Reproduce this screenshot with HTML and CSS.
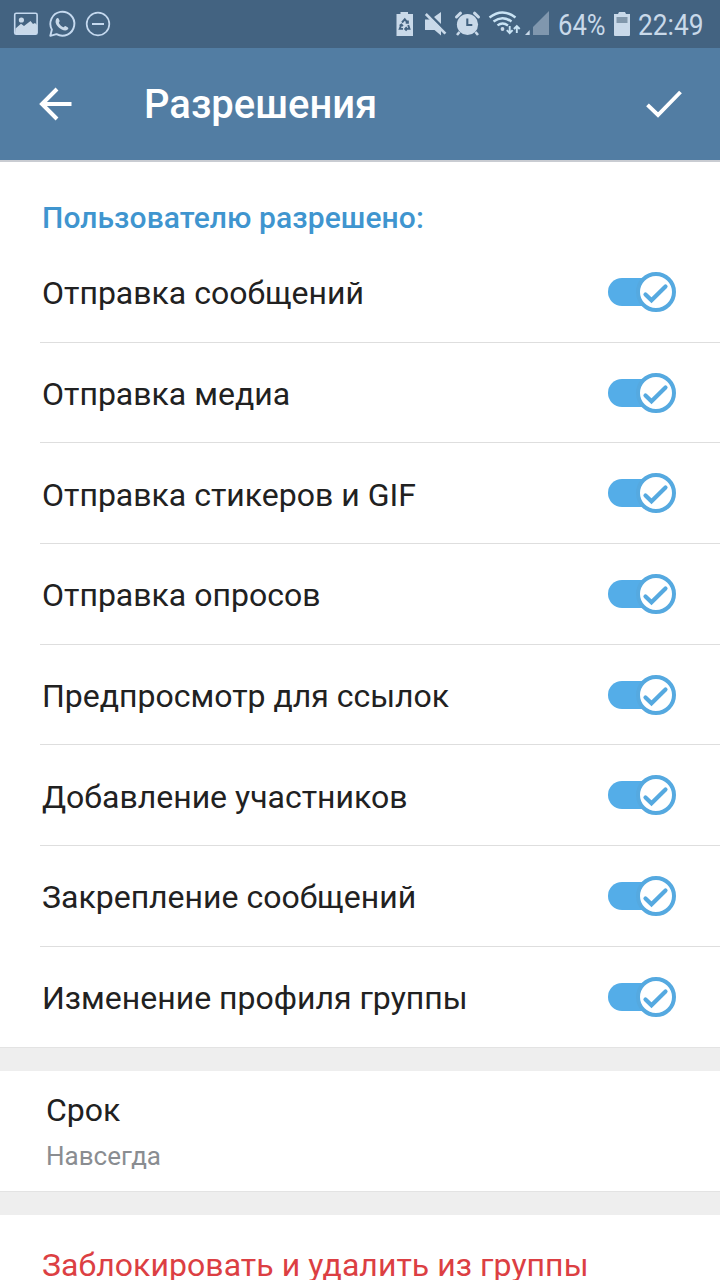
FILE: index.html
```html
<!DOCTYPE html>
<html lang="ru">
<head>
  <meta charset="UTF-8" />
  <meta name="viewport" content="width=device-width, initial-scale=1.0"/>
  <title>Разрешения</title>
  <link rel="stylesheet" href="styles.css">
</head>
<body>
  <svg class="sprite" aria-hidden="true">
    <symbol id="toggle" viewBox="0 0 70 42">
      <path d="M15 7h34v28H15a14 14 0 0 1 0-28z" fill="#54ade8"/>
      <circle cx="49" cy="21" r="18" fill="#fff" stroke="#55a9e0" stroke-width="4"/>
      <path d="M38.500 23.500l6 5.800L58.500 15.500" fill="none" stroke="#55a9e0" stroke-width="4.200" stroke-linecap="round"/>
    </symbol>
  </svg>

  <div class="status-bar">
    <svg width="100" height="48" viewBox="12 0 100 48">
      <rect x="14.700" y="13.200" width="22.400" height="21" rx="1.500" fill="none" stroke="#c5d9ef" stroke-width="1.600"/>
      <circle cx="21.400" cy="20" r="2.600"/>
      <path d="M15.500 28.500l5.500-4.800 3 2.300 6.500-5 2.500 3 2-1 2 2v9H15z"/>
      <path d="M50.300 35.800l1.600-6.200a12 12 0 1 1 4.600 4.600z" fill="none" stroke="#c5d9ef" stroke-width="1.900" stroke-linejoin="round"/>
      <path d="M56.900 18.200c.7-.6 1.500-.3 1.800.5l.9 2.100c.3.900-.9 1.500-.7 2.100.8 1.900 2.400 3.500 4.500 4.300.7.200 1.300-1.300 2-1.100l2.500 1.300c.8.500.4 1.500-.3 2.200-3.800 3.400-12.800-4-12-8.700.2-1.200.6-2.100 1.300-2.700z"/>
      <circle cx="98" cy="24" r="11.300" fill="none" stroke="#c5d9ef" stroke-width="1.700"/>
      <path d="M92 24h12" stroke="#c5d9ef" stroke-width="2"/>
    </svg>
    <svg width="154" height="48" viewBox="396 0 154 48">
      <path d="M396.500 14h4v-2h7.500v2h5v22h-16.500z"/>
      <g fill="none" stroke="#436381" stroke-width="1.900">
        <path d="M402 22.500l2.800-3.200 2.700 3.200M408.200 25l1.300 3.900h-3.800M403 28.900h-3.300l1.600-4"/>
        <path d="M405.700 22.800h2.200v-2.200M406.800 27.200l-1.600 1.700 1.600 1.600M399.700 25.800l1.700-1.200 1.500 1.600"/>
      </g>
      <path d="M425 19.500h8l8 8v8L434.500 30H425zM434 17l7-5v12z"/>
      <path d="M427.500 12.500l19 19" stroke="#436381" stroke-width="2"/>
      <path d="M425.800 14l19.600 19.600" stroke="#c9d9e9" stroke-width="2.700"/>
      <circle cx="467.500" cy="24.500" r="10.600"/>
      <path d="M459.500 32l-2.500 3M475.500 32l2.500 3" stroke="#c9d9e9" stroke-width="2.600"/>
      <path d="M456.500 17l4-3.800M478.500 17l-4-3.800" stroke="#c9d9e9" stroke-width="3" stroke-linecap="round"/>
      <path d="M467.300 18.500V25h5" fill="none" stroke="#436381" stroke-width="2.100"/>
      <g fill="none" stroke="#c9e3f4" stroke-width="2.400">
        <path d="M489.500 17.500q13-10 26 0M493.500 21.500q9-6.700 18 0M497.500 25.400q5-3.700 10.500 0"/>
      </g>
      <circle cx="502.500" cy="29" r="1.900"/>
      <path d="M509.700 26v7M506.800 30.200l2.900 3 2.900-3M516.800 33v-6.500M513.900 29l2.900-3 2.900 3" fill="none" stroke="#c9e3f4" stroke-width="1.900"/>
      <path d="M525 35l4.700-5v5z"/>
      <path d="M533 35V27L549 11v24z" fill="#8097ae"/>
    </svg>
    <svg width="49" height="48" viewBox="0 0 49 48"><text x="0" y="35" textLength="47.500" lengthAdjust="spacingAndGlyphs">64%</text></svg>
    <svg class="battery" width="16" height="48" viewBox="614 0 16 48">
      <path d="M614 14h4l1-2h6l1 2h4v21q0 1-1 1h-14q-1 0-1-1z"/>
      <path d="M616.500 17h11v6h-11z" fill="#8197ab"/>
    </svg>
    <svg width="68" height="48" viewBox="0 0 68 48"><text x="0" y="35" textLength="65.500" lengthAdjust="spacingAndGlyphs">22:49</text></svg>
  </div>

  <header class="app-bar">
    <svg width="34" height="34" viewBox="0 0 34 34"><path d="M32.500 17H4M18 2L3 17l15 15" fill="none" stroke="#fff" stroke-width="4"/></svg>
    <h1>Разрешения</h1>
    <svg width="36" height="28" viewBox="0 0 36 28"><path d="M1.500 14.800L12 25 34.500 2" fill="none" stroke="#fff" stroke-width="3.900"/></svg>
  </header>

  <section class="permissions">
    <h2>Пользователю разрешено:</h2>
    <div class="row"><span>Отправка сообщений</span><svg class="toggle"><use href="#toggle"/></svg></div>
    <div class="row"><span>Отправка медиа</span><svg class="toggle"><use href="#toggle"/></svg></div>
    <div class="row"><span>Отправка стикеров и GIF</span><svg class="toggle"><use href="#toggle"/></svg></div>
    <div class="row"><span>Отправка опросов</span><svg class="toggle"><use href="#toggle"/></svg></div>
    <div class="row"><span>Предпросмотр для ссылок</span><svg class="toggle"><use href="#toggle"/></svg></div>
    <div class="row"><span>Добавление участников</span><svg class="toggle"><use href="#toggle"/></svg></div>
    <div class="row"><span>Закрепление сообщений</span><svg class="toggle"><use href="#toggle"/></svg></div>
    <div class="row"><span>Изменение профиля группы</span><svg class="toggle"><use href="#toggle"/></svg></div>
  </section>

  <div class="separator"></div>

  <section class="duration">
    <div class="duration-title">Срок</div>
    <div class="duration-value">Навсегда</div>
  </section>

  <div class="separator"></div>

  <section class="ban">Заблокировать и удалить из группы</section>
</body>
</html>
```
FILE: styles.css
```css
body {
  margin: 0;
  height: 1280px;
  overflow: hidden;
  background: #fff;
  color: #212121;
  font-family: Roboto, "Noto Sans", sans-serif;
  font-size: 32px;
}

svg {
  display: block;
  flex: none;
}

.sprite {
  display: none;
}

.status-bar {
  display: flex;
  height: 48px;
  padding: 0 14px 0 12px;
  background: #436381;
}

.status-bar svg {
  fill: #c9d9e9;
}

.status-bar svg:nth-child(2) {
  margin-left: auto;
  margin-right: 8px;
}

.status-bar text {
  font-size: 30px;
}

.status-bar .battery {
  margin: 0 8px 0 7px;
}

.app-bar {
  display: flex;
  align-items: center;
  height: 114px;
  padding: 0 38px 0 39px;
  box-sizing: border-box;
  background: #527da3;
  border-bottom: 2px solid #c9ccd2;
  color: #fff;
}

.app-bar h1 {
  flex: 1;
  margin: 0 0 0 71px;
  padding-top: 2px;
  font-size: 40px;
  font-weight: 500;
  line-height: 48px;
}

h2 {
  margin: 0;
  height: 80px;
  padding: 38px 0 0 42px;
  box-sizing: border-box;
  color: #3f95cf;
  font-size: 30px;
  font-weight: 500;
  letter-spacing: 0.08px;
  line-height: 36px;
}

.row {
  display: flex;
  justify-content: space-between;
  align-items: center;
  height: 100.700px;
  margin-left: 40px;
  padding: 0 43px 0 2px;
  box-sizing: border-box;
  border-bottom: 1px solid #dedede;
}

.row:last-child {
  height: 100px;
  border-bottom: 0;
}

.row span {
  padding-top: 3px;
}

.toggle {
  width: 70px;
  height: 42px;
}

.separator {
  height: 24px;
  background: #eee;
  border-top: 1px solid #e3e3e3;
  box-sizing: border-box;
}

.duration {
  height: 120px;
  padding: 20px 46px 0;
  box-sizing: border-box;
}

.duration-title {
  line-height: 38px;
}

.duration-value {
  margin-top: 11px;
  color: #8a8d91;
  font-size: 26px;
  line-height: 32px;
}

.ban {
  padding: 31px 42px 0;
  color: #dc3f43;
  letter-spacing: 0.050px;
  line-height: 38px;
}
```
